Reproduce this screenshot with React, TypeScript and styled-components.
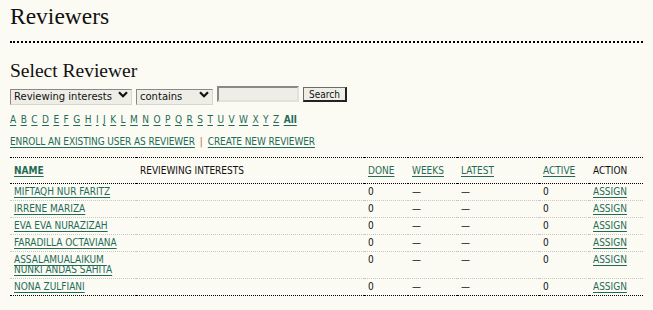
import * as React from "react";
import styled, { createGlobalStyle } from "styled-components";

const GlobalStyle = createGlobalStyle`
  body {
    margin: 0;
    background: #fbfbf4;
    color: #111;
  }
`;

const LINK = "#1f6b57";
const SMALL = `"DejaVu Sans Condensed", "DejaVu Sans", sans-serif`;

type Reviewer = {
  name: string;
  done: number;
  active: number;
};

const reviewers: Reviewer[] = [
  { name: "MIFTAQH NUR FARITZ", done: 0, active: 0 },
  { name: "IRRENE MARIZA", done: 0, active: 0 },
  { name: "EVA EVA NURAZIZAH", done: 0, active: 0 },
  { name: "FARADILLA OCTAVIANA", done: 0, active: 0 },
  { name: "ASSALAMUALAIKUM NUNKI ANDAS SAHITA", done: 0, active: 0 },
  { name: "NONA ZULFIANI", done: 0, active: 0 },
];

const letters = "ABCDEFGHIJKLMNOPQRSTUVWXYZ".split("");

function Chevron() {
  return (
    <ChevronIcon width="10" height="7" viewBox="0 0 10 7">
      <polyline points="1,1.2 5,5.2 9,1.2" fill="none" stroke="#111" strokeWidth="2.2" />
    </ChevronIcon>
  );
}

export default function App() {
  return (
    <Page>
      <GlobalStyle />
      <Title>Reviewers</Title>
      <Subtitle>Select Reviewer</Subtitle>
      <SearchForm onSubmit={(e) => e.preventDefault()}>
        <SelectWrap $width={122}>
          <StyledSelect defaultValue="interests">
            <option value="interests">Reviewing interests</option>
            <option value="name">Name</option>
          </StyledSelect>
          <Chevron />
        </SelectWrap>
        <SelectWrap $width={77}>
          <StyledSelect defaultValue="contains">
            <option value="contains">contains</option>
            <option value="is">is</option>
          </StyledSelect>
          <Chevron />
        </SelectWrap>
        <SearchInput type="text" />
        <SearchButton type="submit">Search</SearchButton>
      </SearchForm>

      <Alphabet>
        {letters.map((l) => (
          <React.Fragment key={l}>
            <Link href="#">{l}</Link>{" "}
          </React.Fragment>
        ))}
        <Link href="#" $bold>All</Link>
      </Alphabet>

      <Actions>
        <Link href="#">ENROLL AN EXISTING USER AS REVIEWER</Link>
        <Pipe>|</Pipe>
        <Link href="#">CREATE NEW REVIEWER</Link>
      </Actions>

      <Table>
        <colgroup>
          <col style={{ width: 126 }} />
          <col style={{ width: 228 }} />
          <col style={{ width: 44 }} />
          <col style={{ width: 49 }} />
          <col style={{ width: 82 }} />
          <col style={{ width: 50 }} />
          <col style={{ width: 54 }} />
        </colgroup>
        <thead>
          <tr>
            <Th><Link href="#" $bold>NAME</Link></Th>
            <Th>REVIEWING INTERESTS</Th>
            <Th><Link href="#">DONE</Link></Th>
            <Th><Link href="#">WEEKS</Link></Th>
            <Th><Link href="#">LATEST</Link></Th>
            <Th><Link href="#">ACTIVE</Link></Th>
            <Th>ACTION</Th>
          </tr>
        </thead>
        <tbody>
          {reviewers.map((r, i) => (
            <Row key={r.name} $last={i === reviewers.length - 1}>
              <Td><Link href="#">{r.name}</Link></Td>
              <Td></Td>
              <Td>{r.done}</Td>
              <Td>—</Td>
              <Td>—</Td>
              <Td>{r.active}</Td>
              <Td><Link href="#">ASSIGN</Link></Td>
            </Row>
          ))}
        </tbody>
      </Table>
    </Page>
  );
}

const Page = styled.div`
  padding: 0 10px;
`;

const Title = styled.h2`
  margin: 2px 0 0;
  padding-bottom: 11px;
  border-bottom: 2px dotted #000;
  font-family: "Liberation Serif", serif;
  font-weight: normal;
  font-size: 23.5px;
  line-height: 28px;
`;

const Subtitle = styled.h3`
  margin: 17px 0 0;
  font-family: "Liberation Serif", serif;
  font-weight: normal;
  font-size: 19.5px;
  line-height: 22px;
`;

const SearchForm = styled.form`
  display: flex;
  align-items: center;
  gap: 4px;
  margin-top: 4px;
  height: 16px;
`;

const SelectWrap = styled.div<{ $width: number }>`
  position: relative;
  width: ${(p) => p.$width}px;
  height: 16px;
`;

const StyledSelect = styled.select`
  appearance: none;
  width: 100%;
  height: 16px;
  margin: 0;
  padding: 0 0 0 3px;
  box-sizing: border-box;
  border: 1px solid;
  border-color: #8a8a84 #d6d6ce #d6d6ce #8a8a84;
  border-radius: 0;
  background: #eeeee6;
  font-family: "DejaVu Sans", sans-serif;
  font-size: 10px;
  color: #111;
  outline: none;
`;

const ChevronIcon = styled.svg`
  position: absolute;
  right: 4px;
  top: 5px;
  pointer-events: none;
`;

const SearchInput = styled.input`
  width: 82px;
  height: 16px;
  box-sizing: border-box;
  margin: 0;
  padding: 0 2px;
  border: 2px solid;
  border-color: #8a8a84 #e2e2da #e2e2da #8a8a84;
  background: #eeeee6;
  font-size: 10px;
  outline: none;
`;

const SearchButton = styled.button`
  width: 44px;
  height: 15px;
  box-sizing: border-box;
  margin: 1px 0 0;
  padding: 0;
  border: 1px solid #6a6a66;
  border-right: 2px solid #222;
  border-bottom: 2px solid #222;
  background: #eeeee6;
  font-family: ${SMALL};
  font-size: 10px;
  line-height: 11px;
  color: #111;
`;

const Alphabet = styled.div`
  margin-top: 12px;
  font-family: ${SMALL};
  font-size: 10px;
  line-height: 12px;
  word-spacing: 1.6px;
`;

const Actions = styled.div`
  margin-top: 10px;
  font-family: ${SMALL};
  font-size: 10px;
  line-height: 12px;
  letter-spacing: -0.1px;
`;

const Pipe = styled.span`
  color: #b07020;
  margin: 0 5px;
`;

const Link = styled.a<{ $bold?: boolean }>`
  color: ${LINK};
  text-decoration: underline;
  text-underline-offset: 2px;
  font-weight: ${(p) => (p.$bold ? "bold" : "normal")};
`;

const Table = styled.table`
  width: 633px;
  margin-top: 9px;
  border-collapse: collapse;
  table-layout: fixed;
  font-family: ${SMALL};
  font-size: 10px;
  line-height: 10px;
  border-top: 1px dotted #000;
`;

const Th = styled.th`
  text-align: left;
  font-weight: normal;
  padding: 8px 4px 7px;
  border-bottom: 1px dotted #000;
  color: #111;
`;

const Row = styled.tr<{ $last: boolean }>`
  border-bottom: 1px dotted ${(p) => (p.$last ? "#000" : "#c8c8c0")};
`;

const Td = styled.td`
  vertical-align: top;
  padding: 3px 4px;
  color: #111;
`;
